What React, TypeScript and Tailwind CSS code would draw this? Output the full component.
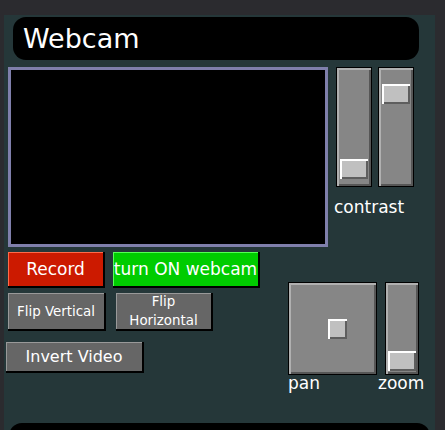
import React from "react";

const font = { fontFamily: '"DejaVu Sans", Verdana, sans-serif' };

function Thumb({ className = "" }: { className?: string }) {
  return (
    <div
      className={
        "w-[28px] h-[20px] shrink-0 bg-[#c0c0c0] shadow-[inset_2px_2px_0_#ffffff,inset_-2px_-2px_0_#5e5e5e] " +
        className
      }
    />
  );
}

function Track({
  className = "",
  children,
}: {
  className?: string;
  children?: React.ReactNode;
}) {
  return (
    <div
      className={
        "relative z-10 shrink-0 border border-black bg-[#868686] shadow-[inset_2px_2px_0_#b0b0b0,inset_-2px_-2px_0_#565656] flex flex-col " +
        className
      }
    >
      {children}
    </div>
  );
}

function Btn({
  className = "",
  children,
}: {
  className?: string;
  children: React.ReactNode;
}) {
  return (
    <div
      className={
        "flex shrink-0 items-center justify-center text-center text-white border-r-2 border-b-2 border-black leading-[19px] " +
        className
      }
    >
      {children}
    </div>
  );
}

export default function App() {
  return (
    <div
      className="w-[445px] h-[430px] bg-[#2b2b2f] overflow-hidden pt-[15px] pl-[4px]"
      style={font}
    >
      <div className="w-[431px] h-[460px] bg-[#253739] pt-[2px]">
        <div className="ml-[9px] w-[406px] h-[43px] rounded-[13px] bg-black flex items-center pl-[10px] text-white text-[27px] leading-none">
          Webcam
        </div>

        <div className="flex mt-[7px] ml-[4px] h-[180px]">
          <div className="w-[320px] h-[180px] shrink-0 border-[3px] border-[#7f7fab] bg-black" />
          <div className="flex flex-col ml-[8px]">
            <div className="flex gap-[6px]">
              <Track className="w-[36px] h-[120px] items-center justify-end pb-[7px]">
                <Thumb />
              </Track>
              <Track className="w-[36px] h-[120px] items-center pt-[16px]">
                <Thumb />
              </Track>
            </div>
            <div className="mt-[10px] -ml-[2px] text-white text-[17px] leading-[20px]">
              contrast
            </div>
          </div>
        </div>

        <div className="flex h-[171px] mt-[5px]">
          <div className="w-[280px] shrink-0 ml-[4px] flex flex-col">
            <div className="flex gap-[8px]">
              <Btn className="w-[97px] h-[36px] bg-[#cc1a00] shadow-[inset_1px_1px_0_#ff6a4a] text-[17px]">
                Record
              </Btn>
              <Btn className="w-[147px] h-[36px] bg-[#00cc00] shadow-[inset_1px_1px_0_#55ff55] text-[17px]">
                turn ON webcam
              </Btn>
            </div>
            <div className="flex gap-[10px] mt-[5px]">
              <Btn className="w-[98px] h-[38px] bg-[#666666] shadow-[inset_1px_1px_0_#999999] text-[13.4px]">
                Flip Vertical
              </Btn>
              <Btn className="w-[97px] h-[38px] bg-[#666666] shadow-[inset_1px_1px_0_#999999] text-[13.4px] leading-[17px]">
                Flip
                <br />
                Horizontal
              </Btn>
            </div>
            <Btn className="w-[138px] h-[31px] mt-[11px] -ml-[2px] bg-[#666666] shadow-[inset_1px_1px_0_#999999] text-[16px]">
              Invert Video
            </Btn>
          </div>

          <div className="flex flex-col mt-[30px]">
            <div className="flex gap-[8px]">
              <Track className="w-[89px] h-[93px] items-center justify-center pl-[10px]">
                <div className="w-[19px] h-[20px] bg-[#c0c0c0] shadow-[inset_2px_2px_0_#ffffff,inset_-2px_-2px_0_#5e5e5e]" />
              </Track>
              <Track className="w-[34px] h-[93px] items-center justify-end pb-[3px]">
                <Thumb className="w-[27px]" />
              </Track>
            </div>
            <div className="mt-[3px] h-[16px] overflow-hidden">
              <div className="flex -mt-[5px] text-white text-[17px] leading-[20px]">
                <span className="w-[90px]">pan</span>
                <span>zoom</span>
              </div>
            </div>
          </div>
        </div>

        <div className="ml-[5px] w-[421px] h-[40px] rounded-[13px] bg-black" />
      </div>
    </div>
  );
}
